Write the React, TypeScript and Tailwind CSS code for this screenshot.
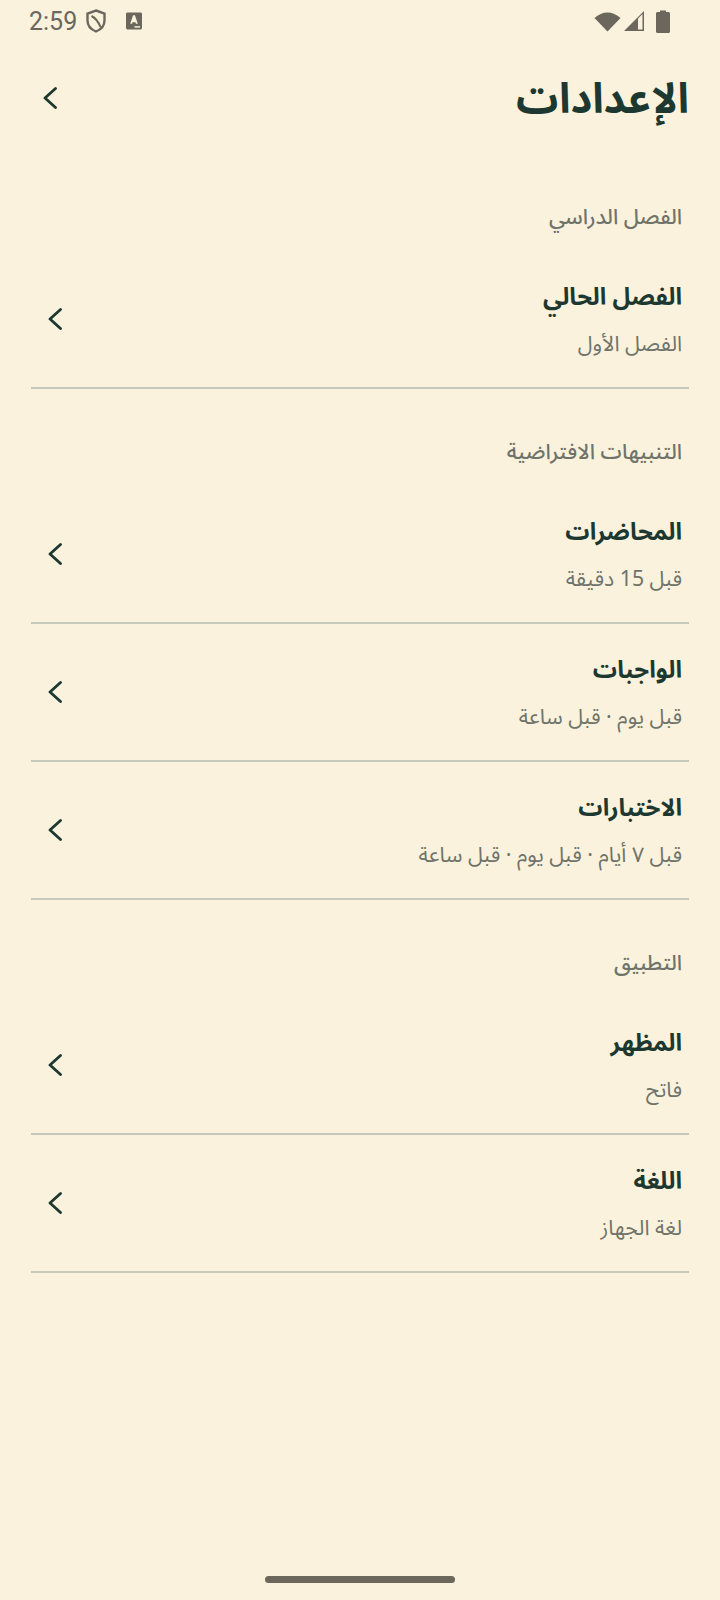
const sections = [
  {
    title: "الفصل الدراسي",
    rows: [{ title: "الفصل الحالي", sub: "الفصل الأول" }],
  },
  {
    title: "التنبيهات الافتراضية",
    rows: [
      { title: "المحاضرات", sub: "قبل 15 دقيقة" },
      { title: "الواجبات", sub: "قبل يوم · قبل ساعة" },
      { title: "الاختبارات", sub: "قبل ٧ أيام · قبل يوم · قبل ساعة" },
    ],
  },
  {
    title: "التطبيق",
    rows: [
      { title: "المظهر", sub: "فاتح" },
      { title: "اللغة", sub: "لغة الجهاز" },
    ],
  },
];

function Chevron({ w, h }: { w: number; h: number }) {
  return (
    <svg width={w} height={h} viewBox="0 0 14 22" fill="none" stroke="#1d3830" strokeWidth="2.8" strokeLinecap="round" strokeLinejoin="round">
      <path d="M12.5 1.5 L2 11 L12.500 20.500" />
    </svg>
  );
}

function StatusBar() {
  return (
    <div className="mb-[2px] flex h-[42px] items-center justify-between pl-[29px] pr-[50px] text-[#6b675c]">
      <div className="flex items-center">
        <span className="font-['Roboto',sans-serif] text-[25px] leading-none">2:59</span>
        <svg className="ml-[9px]" width="20" height="24" viewBox="0.5 0 20 24" fill="none" stroke="#6b675c" strokeWidth="2.4">
          <path d="M10.5 1.5 L19 4.5 V11.5 C19 16.5 15.5 20.5 10.5 22.500 C5.5 20.5 2 16.5 2 11.5 V4.5 Z" />
          <path d="M6 7 C10 9 13 13 15 18" strokeWidth="2" />
        </svg>
        <svg className="ml-[20px]" width="16" height="18" viewBox="0 0 17 18">
          <rect width="17" height="18" rx="1.5" fill="#6b675c" />
          <path d="M4.500 12 L7.500 3 H9.500 L12.500 12 H10.600 L10 10.200 H7 L6.400 12 Z" fill="#faf2dc" />
          <rect x="9" y="14.500" width="6" height="1.500" fill="#faf2dc" />
        </svg>
      </div>
      <div className="flex items-center">
        <svg width="27" height="22" viewBox="0 0 27 22">
          <path d="M13.500 21.500 L0.500 8 C8 0.500 19 0.500 26.500 8 Z" fill="#6b675c" />
        </svg>
        <svg className="ml-[2px]" width="22" height="22" viewBox="0 0 22 22">
          <path d="M1 21 L21 1 V21 Z" fill="#6b675c" />
          <path d="M15 8.500 L19.500 4 V19.500 H15 Z" fill="#faf2dc" />
        </svg>
        <svg className="ml-[11px]" width="14" height="23" viewBox="0 0 14 23">
          <path d="M4 2 V0.500 H10 V2 H12.500 C13.300 2 14 2.700 14 3.500 V21.500 C14 22.300 13.300 23 12.500 23 H1.500 C0.700 23 0 22.300 0 21.500 V3.500 C0 2.700 0.700 2 1.500 2 Z" fill="#6b675c" />
        </svg>
      </div>
    </div>
  );
}

function Row({ title, sub }: { title: string; sub: string }) {
  return (
    <div className="flex h-[138px] items-center justify-between border-b-[2px] border-[#c6c9ba] pl-[17px] pr-[7px]">
      <div className="pt-[2px] text-right">
        <div className="text-[24px] font-bold leading-[36px] text-[#1d3830]">{title}</div>
        <div className="mt-[14px] text-[21.3px] leading-[30px] text-[#6f736a]">{sub}</div>
      </div>
      <Chevron w={14} h={22} />
    </div>
  );
}

export default function App() {
  return (
    <div dir="ltr" className="relative h-[1600px] w-[720px] overflow-hidden bg-[#faf2dc] font-['Noto_Sans_Arabic','Noto_Sans','DejaVu_Sans',sans-serif]">
      <StatusBar />
      <div className="flex h-[110px] items-center justify-between pl-[43px] pr-[31px]">
        <div className="mb-[2px]">
          <Chevron w={14} h={24} />
        </div>
        <h1 dir="rtl" className="pt-[2px] text-[42px] font-bold leading-none text-[#1d3830]">الإعدادات</h1>
      </div>
      <div className="px-[31px]">
        {sections.map((s) => (
          <div key={s.title}>
            <div dir="rtl" className="flex h-[97px] items-center pr-[7px] pt-[30px] text-[21.3px] font-medium text-[#6f736a]">{s.title}</div>
            <div dir="rtl">
              {s.rows.map((r) => (
                <Row key={r.title} title={r.title} sub={r.sub} />
              ))}
            </div>
          </div>
        ))}
      </div>
      <div className="absolute bottom-[17px] left-[265px] h-[7px] w-[190px] rounded-full bg-[#6b675c]" />
    </div>
  );
}
